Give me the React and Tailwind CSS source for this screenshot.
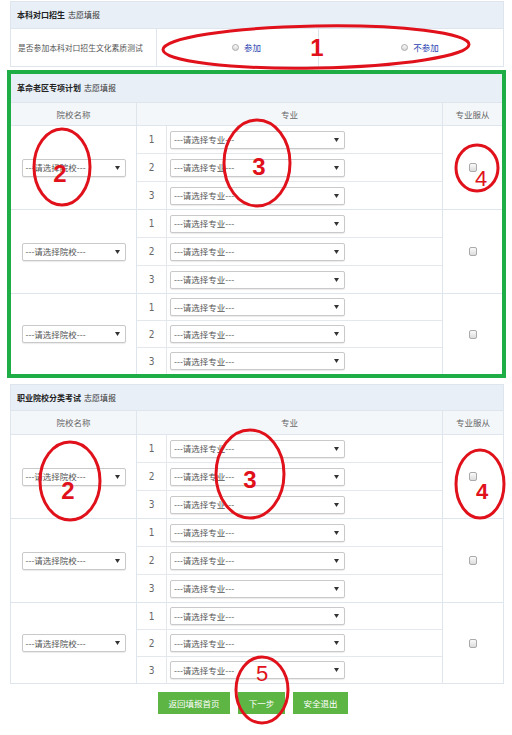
import React from "react";

const Arrow = () => (
  <svg width="5" height="4" viewBox="0 0 5 4" className="shrink-0">
    <path d="M0 0 L5 0 L2.5 4 Z" fill="#333" />
  </svg>
);

const Select = ({ w, text }) => (
  <div
    className="h-[18px] flex items-center justify-between border border-[#c9c9c9] rounded-[2px] bg-white pl-[3px] pr-[5px] shadow-[0_1px_1px_rgba(0,0,0,0.08)]"
    style={{ width: w }}
  >
    <span className="text-[8.5px] text-[#555] leading-none whitespace-nowrap">{text}</span>
    <Arrow />
  </div>
);

const Checkbox = () => (
  <div className="w-[8px] h-[9px] rounded-[2px] border border-[#aaa] bg-gradient-to-b from-[#fafafa] to-[#dcdcdc]" />
);

const Group = ({ h }) => (
  <div className="flex border-t border-[#dfe5ec]" style={{ height: h }}>
    <div className="w-[126px] shrink-0 flex items-center justify-center border-r border-[#dfe5ec]">
      <Select w={104} text="---请选择院校---" />
    </div>
    <div className="w-[306px] shrink-0 flex flex-col border-r border-[#dfe5ec]">
      {[1, 2, 3].map((n) => (
        <div
          key={n}
          className={
            "flex-1 flex " + (n < 3 ? "border-b border-[#e4e8ed]" : "")
          }
        >
          <div className="w-[30px] shrink-0 flex items-center justify-center border-r border-[#e4e8ed] text-[10px] text-[#666] font-['DejaVu_Sans_Condensed',sans-serif] font-light">
            {n}
          </div>
          <div className="flex-1 flex items-center pl-[3px]">
            <Select w={175} text="---请选择专业---" />
          </div>
        </div>
      ))}
    </div>
    <div className="flex-1 flex items-center justify-center">
      <Checkbox />
    </div>
  </div>
);

const Header = ({ bold, h }) => (
  <div
    className="flex items-center pl-[6px] bg-[#e8eff6] border-b border-[#dfe5ec] text-[8px] text-[#222]"
    style={{ height: h }}
  >
    <span className="font-bold">{bold}</span>
    <span className="ml-[3px] text-[#333]">志愿填报</span>
  </div>
);

const ColHeader = ({ h }) => (
  <div className="flex bg-[#f4f7fa] text-[8.5px] text-[#666]" style={{ height: h }}>
    <div className="w-[126px] shrink-0 flex items-center justify-center border-r border-[#dfe5ec]">
      院校名称
    </div>
    <div className="w-[306px] shrink-0 flex items-center justify-center border-r border-[#dfe5ec]">
      专业
    </div>
    <div className="flex-1 flex items-center justify-center">专业服从</div>
  </div>
);

const Radio = ({ label }) => (
  <div className="flex items-center gap-[5px]">
    <div className="w-[7px] h-[7px] rounded-full border border-[#aaa] bg-gradient-to-b from-[#fafafa] to-[#d8d8d8]" />
    <span className="text-[8.5px] text-[#2a3fb0]">{label}</span>
  </div>
);

const Annotations = () => (
  <svg
    className="absolute left-0 top-0 pointer-events-none"
    width="512"
    height="735"
    viewBox="0 0 512 735"
  >
    <g fill="none" stroke="#e0111b" strokeWidth="3">
      <ellipse cx="316" cy="47" rx="153" ry="21" transform="rotate(-1 316 47)" />
      <ellipse cx="62" cy="167" rx="28" ry="38" />
      <ellipse cx="257" cy="163" rx="33" ry="43" />
      <ellipse cx="477" cy="168" rx="21" ry="23" />
      <ellipse cx="70" cy="481" rx="30" ry="39" />
      <ellipse cx="250" cy="474" rx="34" ry="44" />
      <ellipse cx="480" cy="484" rx="24" ry="34" />
      <ellipse cx="262" cy="690" rx="26" ry="33" />
    </g>
    <g fill="#e0111b" fontFamily="Liberation Sans, Arial, sans-serif" textAnchor="middle">
      <text x="317" y="56" fontSize="24" fontWeight="bold">1</text>
      <text x="60" y="182" fontSize="24" fontWeight="bold">2</text>
      <text x="259" y="175" fontSize="24" fontWeight="bold">3</text>
      <text x="481" y="186" fontSize="22">4</text>
      <text x="68" y="499" fontSize="24" fontWeight="bold">2</text>
      <text x="250" y="488" fontSize="24" fontWeight="bold">3</text>
      <text x="482" y="499" fontSize="22" fontWeight="bold">4</text>
      <text x="262" y="681" fontSize="22">5</text>
    </g>
  </svg>
);

export default function App() {
  return (
    <div className="relative w-[512px] h-[735px] bg-white pt-[1px] font-['Noto_Sans_CJK_SC',sans-serif] overflow-hidden">
      {/* Section 1 */}
      <div className="mx-[10px] w-[494px] border border-[#dfe5ec]">
        <Header bold="本科对口招生" h={27} />
        <div className="flex h-[37px] text-[8.5px]">
          <div className="w-[146px] shrink-0 flex items-center pl-[7px] border-r border-[#dfe5ec] text-[#555] text-[7.8px]">
            是否参加本科对口招生文化素质测试
          </div>
          <div className="w-[162px] shrink-0 flex items-center justify-center pl-[18px] border-r border-[#dfe5ec]">
            <Radio label="参加" />
          </div>
          <div className="flex-1 flex items-center justify-center pl-[18px]">
            <Radio label="不参加" />
          </div>
        </div>
      </div>

      {/* Section 2 - green */}
      <div className="mt-[3px] ml-[7px] w-[499px] border-4 border-[#1fae45]">
        <Header bold="革命老区专项计划" h={29} />
        <ColHeader h={22} />
        <Group h={84} />
        <Group h={84} />
        <Group h={81} />
      </div>

      {/* Section 3 */}
      <div className="mt-[6px] mx-[10px] w-[494px] border border-[#dfe5ec]">
        <Header bold="职业院校分类考试" h={26} />
        <ColHeader h={23} />
        <Group h={84} />
        <Group h={84} />
        <Group h={81} />
      </div>

      {/* Buttons */}
      <div className="mt-[8px] flex justify-center gap-[8px] pr-[6px] text-[8.5px] text-white">
        <div className="w-[72px] h-[22px] bg-[#5db544] flex items-center justify-center">返回填报首页</div>
        <div className="w-[47px] h-[22px] bg-[#5db544] flex items-center justify-center">下一步</div>
        <div className="w-[55px] h-[22px] bg-[#5db544] flex items-center justify-center">安全退出</div>
      </div>

      <Annotations />
    </div>
  );
}
